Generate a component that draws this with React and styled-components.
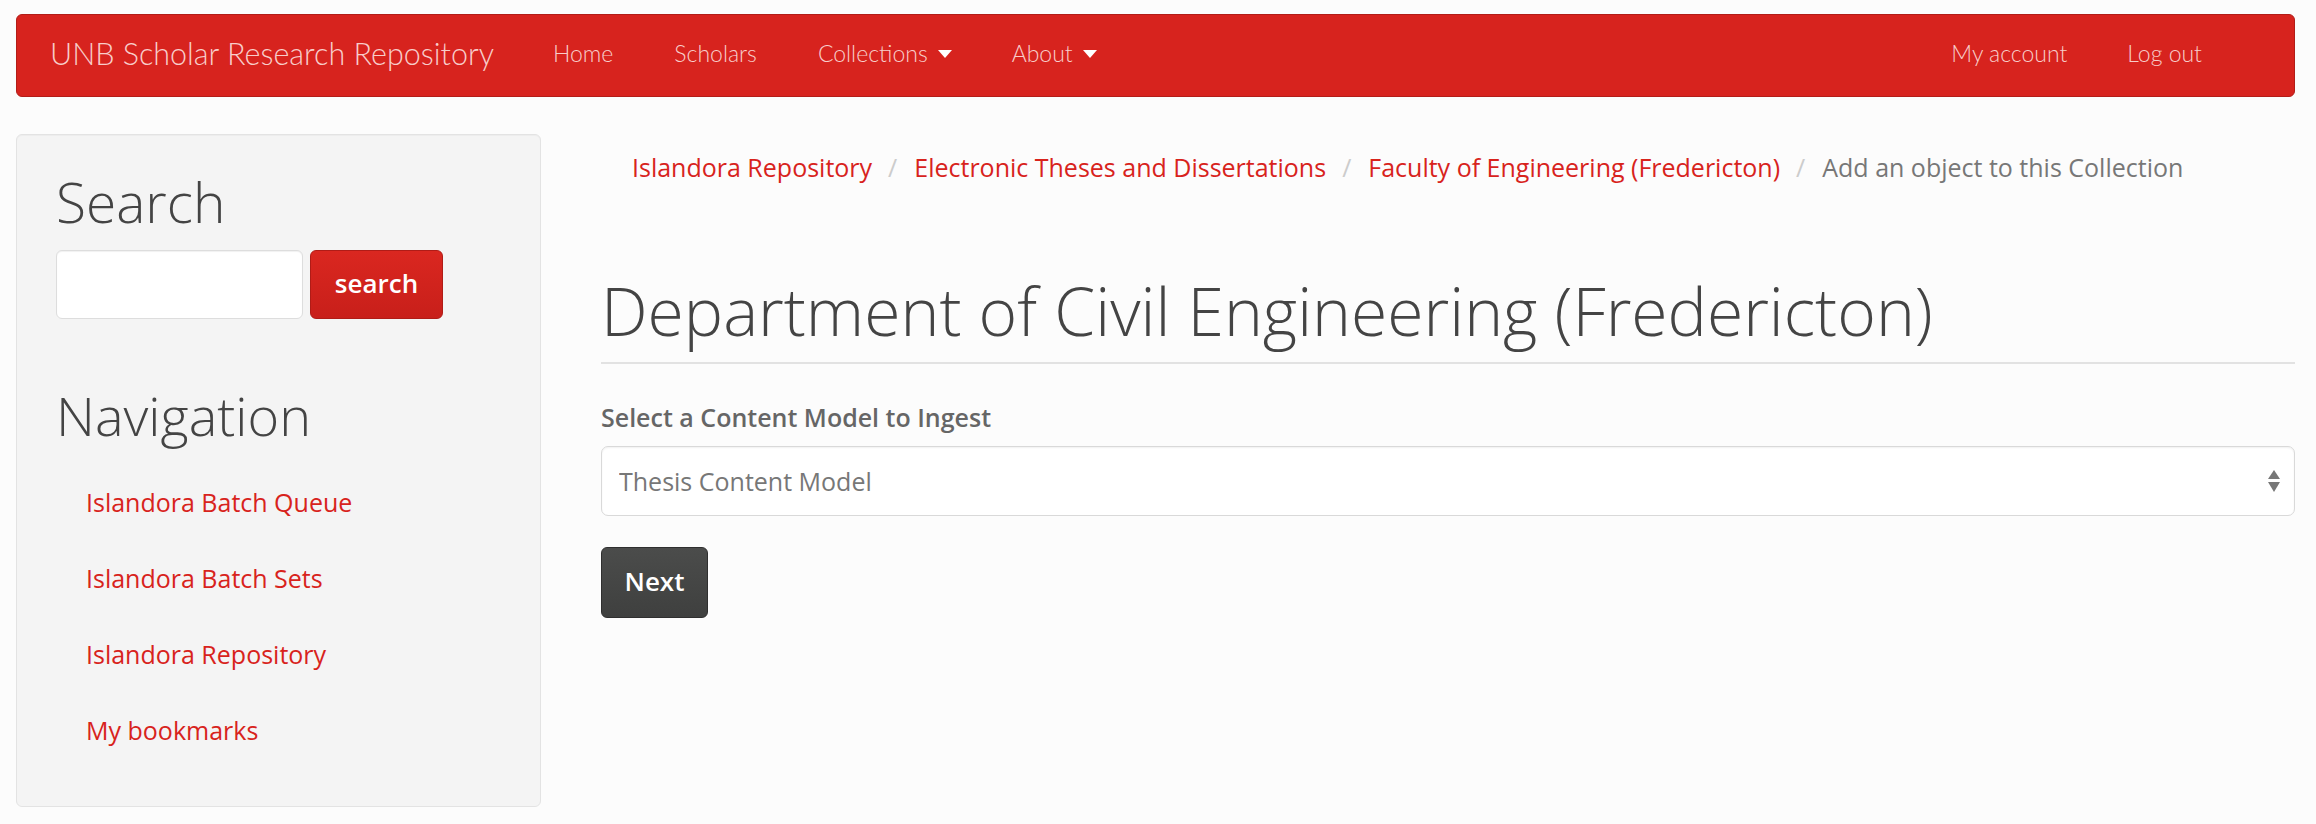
import React from 'react';
import styled, { createGlobalStyle } from 'styled-components';

const GlobalStyle = createGlobalStyle`
  html, body {
    margin: 0;
    padding: 0;
    background: #fcfcfc;
  }
  body {
    font-family: "Open Sans", "Liberation Sans", sans-serif;
    color: #444;
  }
  * {
    box-sizing: border-box;
  }
`;

const Page = styled.div`
  padding: 14px 21px 0 16px;
`;

const Navbar = styled.nav`
  display: flex;
  align-items: center;
  height: 83px;
  padding: 0 0 5px 33px;
  background: #d7231e;
  border: 1px solid #b21d18;
  border-radius: 6px;
  font-family: "Lato", "Liberation Sans", sans-serif;
  font-weight: 300;
  color: #f8cdca;
`;

const Brand = styled.a`
  font-size: 30.5px;
  margin-right: 29px;
  text-decoration: none;
  color: inherit;
  white-space: nowrap;
`;

const NavList = styled.ul`
  display: flex;
  list-style: none;
  margin: 0;
  padding: 0;
  margin-left: ${p => (p.$right ? 'auto' : '0')};
  margin-right: ${p => (p.$right ? '62px' : '0')};
`;

const NavLink = styled.a`
  display: flex;
  align-items: center;
  padding: 0 ${p => (p.$wide ? '31px' : '30px')};
  font-size: 23px;
  color: inherit;
  text-decoration: none;
  white-space: nowrap;
`;

const Caret = styled.span`
  display: inline-block;
  margin-left: 10px;
  margin-top: 2px;
  border-top: 8px solid #fff;
  border-left: 7px solid transparent;
  border-right: 7px solid transparent;
`;

const Body = styled.div`
  display: flex;
  align-items: flex-start;
  gap: 60px;
  margin-top: 37px;
`;

const Sidebar = styled.aside`
  flex: 0 0 525px;
  height: 673px;
  padding: 37px 40px 0 39px;
  background: #f4f4f4;
  border: 1px solid #e3e3e3;
  border-radius: 6px;
  box-shadow: inset 0 1px 1px rgba(0, 0, 0, 0.03);
`;

const BlockTitle = styled.h2`
  margin: ${p => (p.$spaced ? '67px 0 0' : '0')};
  font-size: ${p => (p.$spaced ? '54px' : '55px')};
  font-weight: 300;
  line-height: 1.1;
  color: #444;
`;

const SearchForm = styled.form`
  display: flex;
  gap: 7px;
  margin-top: 17px;
`;

const SearchInput = styled.input`
  width: 247px;
  height: 69px;
  padding: 0 16px;
  background: #fff;
  border: 1px solid #ddd;
  border-radius: 6px;
  box-shadow: inset 0 1px 1px rgba(0, 0, 0, 0.06);
  font: inherit;
  font-size: 25px;
  outline: none;
`;

const RedButton = styled.button`
  width: 133px;
  height: 69px;
  background: linear-gradient(#da2720, #c81f1a);
  border: 1px solid #b01c17;
  border-radius: 6px;
  color: #fff;
  font-family: "Open Sans", "Liberation Sans", sans-serif;
  font-weight: 600;
  font-size: 26px;
  padding: 0 0 2px;
`;

const SideMenu = styled.ul`
  list-style: none;
  margin: 19px 0 0;
  padding: 0 0 0 30px;
`;

const SideLink = styled.a`
  display: block;
  font-size: 25px;
  line-height: 76px;
  color: #d8231c;
  text-decoration: none;
`;

const Main = styled.main`
  flex: 1;
  padding-top: 15px;
`;

const Breadcrumb = styled.ol`
  display: flex;
  list-style: none;
  margin: 0;
  padding: 0 0 0 31px;
  font-size: 25px;
  line-height: 37px;
  white-space: nowrap;
`;

const Crumb = styled.li`
  color: ${p => (p.$active ? '#777' : '#d8231c')};

  &:not(:first-child)::before {
    content: '/';
    padding: 0 17px 0 16px;
    color: #ccc;
  }
`;

const PageHeader = styled.h1`
  margin: 88px 0 0;
  padding-bottom: 15px;
  border-bottom: 2px solid #e2e2e2;
  font-size: 66px;
  font-weight: 300;
  line-height: 1.1;
  color: #444;
`;

const Label = styled.label`
  display: block;
  margin-top: 35px;
  font-size: 25px;
  font-weight: 600;
  line-height: 37px;
  color: #666;
`;

const SelectWrap = styled.div`
  position: relative;
  margin-top: 10px;
`;

const Select = styled.select`
  display: block;
  width: 100%;
  height: 70px;
  padding: 0 60px 0 17px;
  appearance: none;
  background: #fff;
  border: 1px solid #d9d9d9;
  border-radius: 7px;
  box-shadow: inset 0 1px 2px rgba(0, 0, 0, 0.06);
  font-family: "Open Sans", "Liberation Sans", sans-serif;
  font-size: 25px;
  color: #777;
  outline: none;
`;

const SelectArrows = styled.svg`
  position: absolute;
  right: 14px;
  top: 24px;
  pointer-events: none;
`;

const DarkButton = styled.button`
  display: block;
  margin-top: 31px;
  width: 107px;
  height: 71px;
  background: linear-gradient(#4b4c4b, #3f403f);
  border: 1px solid #2f2f2f;
  border-radius: 6px;
  color: #fff;
  font-family: "Open Sans", "Liberation Sans", sans-serif;
  font-weight: 600;
  font-size: 26px;
  padding: 0 0 2px;
`;

const sideLinks = ['Islandora Batch Queue', 'Islandora Batch Sets', 'Islandora Repository', 'My bookmarks'];

const crumbs = [
  'Islandora Repository',
  'Electronic Theses and Dissertations',
  'Faculty of Engineering (Fredericton)',
];

export default function App() {
  return (
    <Page>
      <GlobalStyle />
      <Navbar>
        <Brand href="#">UNB Scholar Research Repository</Brand>
        <NavList>
          <li><NavLink href="#">Home</NavLink></li>
          <li><NavLink href="#" $wide>Scholars</NavLink></li>
          <li><NavLink href="#">Collections<Caret /></NavLink></li>
          <li><NavLink href="#">About<Caret /></NavLink></li>
        </NavList>
        <NavList $right>
          <li><NavLink href="#">My account</NavLink></li>
          <li><NavLink href="#">Log out</NavLink></li>
        </NavList>
      </Navbar>

      <Body>
        <Sidebar>
          <BlockTitle>Search</BlockTitle>
          <SearchForm onSubmit={e => e.preventDefault()}>
            <SearchInput type="text" />
            <RedButton type="submit">search</RedButton>
          </SearchForm>
          <BlockTitle $spaced>Navigation</BlockTitle>
          <SideMenu>
            {sideLinks.map(link => (
              <li key={link}><SideLink href="#">{link}</SideLink></li>
            ))}
          </SideMenu>
        </Sidebar>

        <Main>
          <Breadcrumb>
            {crumbs.map(c => (
              <Crumb key={c}>{c}</Crumb>
            ))}
            <Crumb $active>Add an object to this Collection</Crumb>
          </Breadcrumb>
          <PageHeader>Department of Civil Engineering (Fredericton)</PageHeader>
          <form onSubmit={e => e.preventDefault()}>
            <Label htmlFor="models">Select a Content Model to Ingest</Label>
            <SelectWrap>
              <Select id="models" defaultValue="thesis">
                <option value="thesis">Thesis Content Model</option>
              </Select>
              <SelectArrows width="14" height="23" viewBox="0 0 14 23">
                <path d="M7 0 L13 9 L1 9 Z" fill="#777" />
                <path d="M1 12 L13 12 L7 22 Z" fill="#777" />
              </SelectArrows>
            </SelectWrap>
            <DarkButton type="submit">Next</DarkButton>
          </form>
        </Main>
      </Body>
    </Page>
  );
}
